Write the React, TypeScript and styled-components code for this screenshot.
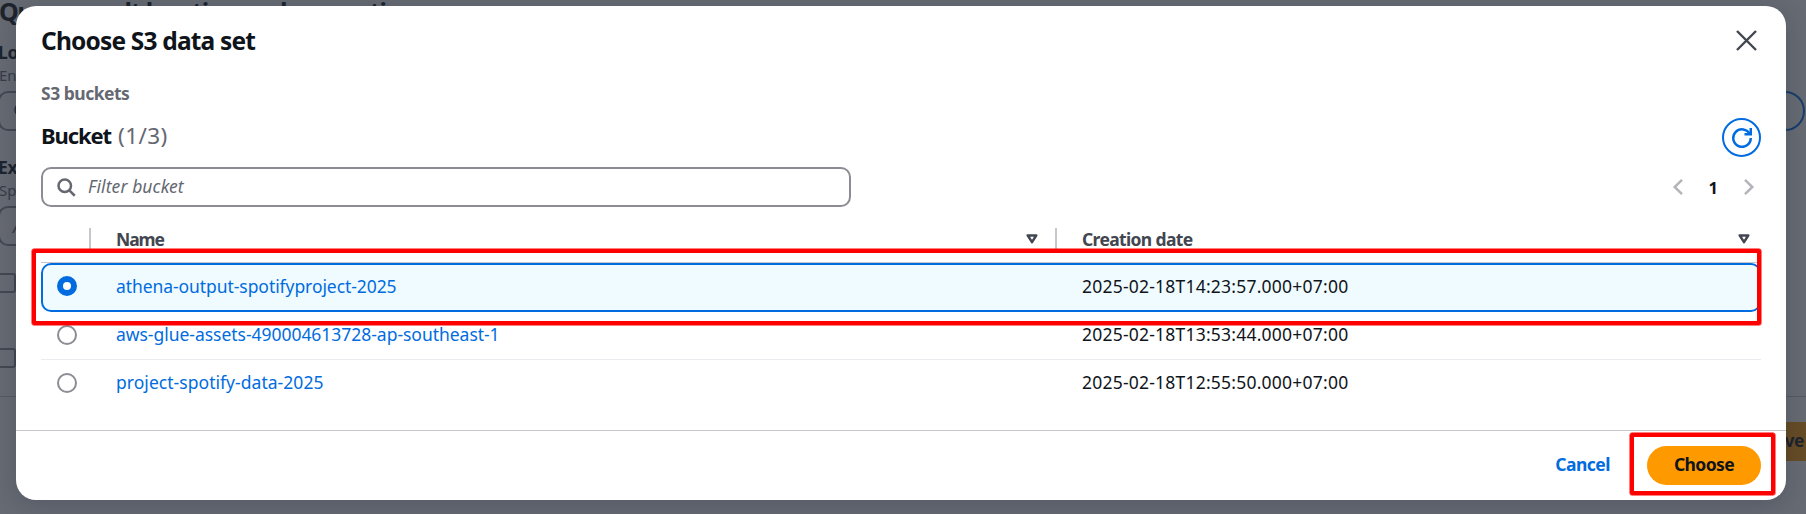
import React from "react";
import styled, { createGlobalStyle } from "styled-components";

const Global = createGlobalStyle`
  * { box-sizing: border-box; }
  body {
    margin: 0;
    overflow: hidden;
    font-family: "Noto Sans", "Open Sans", sans-serif;
    font-size: 17.5px;
    color: #0f141a;
    background: #fff;
  }
`;

const Screen = styled.div`
  position: relative;
  width: 1806px;
  height: 514px;
  overflow: hidden;
`;

/* Settings page behind the dialog */
const SettingsPage = styled.div`
  height: 514px;
  display: flex;
  flex-direction: column;
`;
const PageTitle = styled.h2`
  margin: -5px 0 0 -1px;
  font-size: 25px;
  line-height: 32px;
  letter-spacing: -1.18px;
  white-space: nowrap;
`;
const Field = styled.div<{ $top: number }>`
  display: flex;
  flex-direction: column;
  margin-top: ${(p) => p.$top}px;
`;
const FieldLabel = styled.div`
  font-weight: 700;
  line-height: 24px;
  margin-left: -2px;
  letter-spacing: -0.4px;
`;
const FieldHint = styled.div`
  font-size: 15px;
  line-height: 22px;
  margin-left: -1px;
  color: #656871;
`;
const FieldRow = styled.div`
  display: flex;
  justify-content: space-between;
  margin: 5px 1px 0 -2px;
`;
const FieldInput = styled.div`
  width: 1500px;
  height: 40px;
  border: 2px solid #8c8c94;
  border-radius: 10px;
  padding-left: 13px;
  display: flex;
  align-items: center;
  color: #656871;
  font-style: italic;
`;
const BrowseButton = styled.div`
  width: 160px;
  height: 40px;
  border: 2px solid #006ce0;
  border-radius: 20px;
`;
const PageCheckbox = styled.div<{ $top: number }>`
  width: 20px;
  height: 20px;
  margin: ${(p) => p.$top}px 0 0 -4px;
  border: 2px solid #8c8c94;
  border-radius: 3px;
`;
const PageFooter = styled.div`
  display: flex;
  justify-content: flex-end;
  margin-top: 28px;
  padding-top: 25px;
  border-top: 1px solid #c6c6cd;
`;
const SaveButton = styled.div`
  width: 110px;
  height: 39px;
  padding-right: 2px;
  background: #ff9900;
  font-weight: 700;
  line-height: 36px;
  text-align: right;
  letter-spacing: -0.5px;
`;

/* Dialog */
const Backdrop = styled.div`
  position: absolute;
  inset: 0;
  padding: 6px 20px 14px 16px;
  background: rgba(35, 43, 55, 0.7);
`;
const Dialog = styled.section`
  height: 494px;
  display: flex;
  flex-direction: column;
  background: #fff;
  border-radius: 20px;
  box-shadow: 0 5px 25px rgba(0, 7, 22, 0.16);
`;
const DialogBody = styled.div`
  flex: 1;
  padding: 19px 25px 0;
`;
const DialogHeader = styled.header`
  display: flex;
  justify-content: space-between;
  height: 30px;
`;
const DialogTitle = styled.h2`
  margin: 0;
  font-size: 24.5px;
  line-height: 31px;
  letter-spacing: -0.82px;
`;
const CloseButton = styled.button`
  width: 21px;
  height: 30px;
  margin-right: 4px;
  padding: 0;
  border: 0;
  background: none;
  display: flex;
  align-items: center;
`;
const Breadcrumb = styled.div`
  margin-top: 25px;
  line-height: 26px;
  font-weight: 700;
  letter-spacing: -0.5px;
  color: #656871;
`;
const ToolRow = styled.div<{ $top: number; $height: number }>`
  display: flex;
  justify-content: space-between;
  align-items: center;
  margin-top: ${(p) => p.$top}px;
  height: ${(p) => p.$height}px;
`;
const ListTitle = styled.h3`
  margin: -4px 0 0;
  font-size: 22px;
  line-height: 30px;
  letter-spacing: -1.1px;
`;
const Counter = styled.span`
  margin-left: 7px;
  font-size: 22.5px;
  font-weight: 400;
  letter-spacing: 0.4px;
  color: #656871;
`;
const RefreshButton = styled.button`
  width: 39px;
  height: 39px;
  padding: 0;
  border: 2px solid #006ce0;
  border-radius: 50%;
  background: #fff;
  display: flex;
  align-items: center;
  justify-content: center;
`;
const FilterBox = styled.div`
  width: 810px;
  height: 40px;
  padding: 0 13px;
  border: 2px solid #8c8c94;
  border-radius: 10px;
  display: flex;
  align-items: center;
  gap: 12px;
`;
const FilterText = styled.span`
  margin-top: -2px;
  font-style: italic;
  letter-spacing: 0.1px;
  color: #656871;
`;
const Pager = styled.nav`
  display: flex;
  align-items: center;
  gap: 25px;
  margin-right: 6px;
  font-weight: 700;
  font-size: 16.5px;
`;

const Table = styled.div`
  margin-top: 21px;
`;
const TableRow = styled.div`
  display: grid;
  grid-template-columns: 50px 966px 1fr;
  align-items: center;
`;
const HeadRow = styled(TableRow)`
  height: 35px;
  padding-bottom: 13px;
  border-bottom: 1px solid #c6c6cd;
  color: #424650;
  font-weight: 700;
`;
const HeadCell = styled.div<{ $divider?: boolean; $spacing?: number; $right?: number }>`
  height: 22px;
  padding: 0 ${(p) => p.$right ?? 0}px 0 25px;
  border-right: ${(p) => (p.$divider ? "2px solid #c6c6cd" : "0")};
  display: flex;
  align-items: center;
  justify-content: space-between;
  letter-spacing: ${(p) => p.$spacing ?? 0}px;
`;
const DataRow = styled(TableRow)<{ $selected: boolean; $last: boolean }>`
  position: relative;
  height: ${(p) => (p.$selected ? 49 : 48)}px;
  ${(p) =>
    p.$selected
      ? "background: #f0fbff; border-radius: 10px; box-shadow: inset 0 0 0 2px #006ce0;"
      : `border-bottom: 1px solid ${p.$last ? "transparent" : "#ebebf0"};`}
`;
const RadioCell = styled.div`
  padding-left: 16px;
`;
const Radio = styled.div<{ $checked: boolean; $shift: number }>`
  width: 20px;
  height: 20px;
  margin-top: ${(p) => p.$shift}px;
  border-radius: 50%;
  border: ${(p) => (p.$checked ? "6px solid #006ce0" : "2px solid #8c8c94")};
  background: #fff;
`;
const BucketLink = styled.a<{ $spacing: number }>`
  padding-left: 25px;
  margin-top: -3px;
  color: #006ce0;
  letter-spacing: ${(p) => p.$spacing}px;
`;
const DateCell = styled.div`
  padding-left: 25px;
  margin-top: -3px;
  letter-spacing: 0.22px;
`;

const DialogFooter = styled.footer`
  display: flex;
  align-items: center;
  justify-content: flex-end;
  gap: 37px;
  height: 70px;
  padding: 0 25px;
  border-top: 1px solid #c6c6cd;
  font-weight: 700;
`;
const CancelButton = styled.a`
  margin-top: -3px;
  letter-spacing: -0.5px;
  color: #006ce0;
`;
const ChooseButton = styled.div`
  position: relative;
  width: 114px;
  height: 39px;
  border-radius: 20px;
  background: #ff9900;
  line-height: 37px;
  text-align: center;
  letter-spacing: -0.6px;
`;
const Highlight = styled.div<{ $inset: string }>`
  position: absolute;
  inset: ${(p) => p.$inset};
  border: 4px solid #f00;
  border-radius: 2px;
  box-shadow: 0 0 0 0.5px #f00;
  z-index: 1;
`;

const SortIcon = () => (
  <svg width="12" height="10" viewBox="0 0 12 10">
    <path d="M1.7 1.4h8.6L6 8.2z" fill="none" stroke="#424650" strokeWidth="2.5" strokeLinejoin="round" />
  </svg>
);
const SearchIcon = ({ color }: { color: string }) => (
  <svg width="20" height="20" viewBox="0 0 16 16" fill="none" stroke={color} strokeWidth="2">
    <circle cx="7" cy="7" r="5" />
    <path d="m15 15-4.5-4.5" />
  </svg>
);
const Chevron = ({ next }: { next?: boolean }) => (
  <svg width="12" height="18" viewBox="0 0 12 18" fill="none" stroke="#b4b4bb" strokeWidth="2.5">
    <path d={next ? "M2 1.8 9.3 9 2 16.2" : "M10 1.8 2.7 9l7.3 7.2"} />
  </svg>
);

const buckets = [
  { name: "athena-output-spotifyproject-2025", spacing: -0.07, date: "2025-02-18T14:23:57.000+07:00" },
  { name: "aws-glue-assets-490004613728-ap-southeast-1", spacing: -0.03, date: "2025-02-18T13:53:44.000+07:00" },
  { name: "project-spotify-data-2025", spacing: 0.04, date: "2025-02-18T12:55:50.000+07:00" },
];

export default function App() {
  return (
    <Screen>
      <Global />
      <SettingsPage>
        <PageTitle>Query result location and encryption</PageTitle>
        <Field $top={13}>
          <FieldLabel>Lo</FieldLabel>
          <FieldHint>Ent</FieldHint>
          <FieldRow>
            <FieldInput>
              <SearchIcon color="#424650" />
            </FieldInput>
            <BrowseButton />
          </FieldRow>
        </Field>
        <Field $top={24}>
          <FieldLabel>Ex</FieldLabel>
          <FieldHint>Spe</FieldHint>
          <FieldRow>
            <FieldInput>A</FieldInput>
          </FieldRow>
        </Field>
        <PageCheckbox $top={27} />
        <PageCheckbox $top={55} />
        <PageFooter>
          <SaveButton>Save</SaveButton>
        </PageFooter>
      </SettingsPage>

      <Backdrop>
        <Dialog>
          <DialogBody>
            <DialogHeader>
              <DialogTitle>Choose S3 data set</DialogTitle>
              <CloseButton aria-label="Close">
                <svg width="21" height="21" viewBox="0 0 21 21" stroke="#424650" strokeWidth="2.4">
                  <path d="M1 1l19 19M20 1 1 20" />
                </svg>
              </CloseButton>
            </DialogHeader>
            <Breadcrumb>S3 buckets</Breadcrumb>
            <ToolRow $top={12} $height={39}>
              <ListTitle>
                Bucket<Counter>(1/3)</Counter>
              </ListTitle>
              <RefreshButton aria-label="Refresh">
                <svg width="20" height="20" viewBox="0 0 16 16" fill="none" stroke="#006ce0" strokeWidth="2">
                  <path d="M10 5h5V0" />
                  <path d="M15 8a7 7 0 1 1-.7-3" />
                </svg>
              </RefreshButton>
            </ToolRow>
            <ToolRow $top={10} $height={40}>
              <FilterBox>
                <SearchIcon color="#656871" />
                <FilterText>Filter bucket</FilterText>
              </FilterBox>
              <Pager>
                <Chevron />
                <span>1</span>
                <Chevron next />
              </Pager>
            </ToolRow>
            <Table>
              <HeadRow>
                <HeadCell $divider />
                <HeadCell $divider $spacing={-1.1} $right={17}>
                  Name <SortIcon />
                </HeadCell>
                <HeadCell $spacing={-0.65} $right={11}>
                  Creation date <SortIcon />
                </HeadCell>
              </HeadRow>
              {buckets.map((b, i) => (
                <DataRow key={b.name} $selected={i === 0} $last={i === 2}>
                  <RadioCell>
                    <Radio $checked={i === 0} $shift={i === 0 ? -3 : -1} />
                  </RadioCell>
                  <BucketLink $spacing={b.spacing}>{b.name}</BucketLink>
                  <DateCell>{b.date}</DateCell>
                  {i === 0 && <Highlight $inset="-14px 0 -13px -9px" />}
                </DataRow>
              ))}
            </Table>
          </DialogBody>
          <DialogFooter>
            <CancelButton>Cancel</CancelButton>
            <ChooseButton>
              Choose
              <Highlight $inset="-13px -14px -10px -17px" />
            </ChooseButton>
          </DialogFooter>
        </Dialog>
      </Backdrop>
    </Screen>
  );
}
